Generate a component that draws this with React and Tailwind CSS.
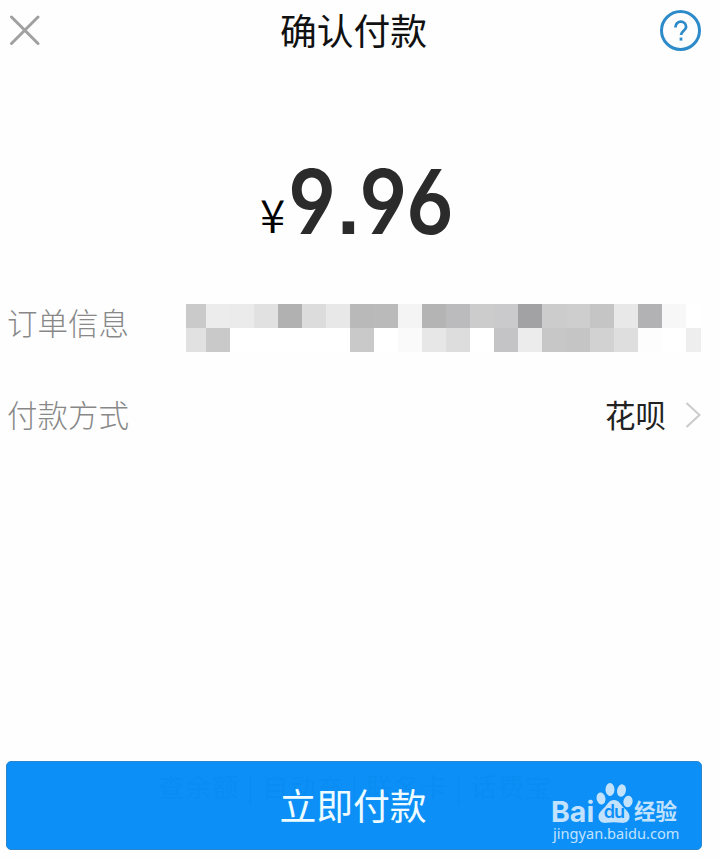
import React from 'react';

// 订单信息的马赛克色块（两行）
const MOSAIC_ROWS = [
  ['#cacaca', '#ececec', '#ebebeb', '#e1e1e1', '#b1b1b1', '#dcdcdc', '#e8e8e8', '#b9b9b9', '#bababa', '#f4f4f4', '#b4b4b4', '#bbbbbd', '#cccccc', '#cacacc', '#a2a2a4', '#cccccc', '#cecece', '#c5c5c5', '#e8e8e8', '#b2b2b4', '#f7f7f7', '#ffffff'],
  ['#e1e1e1', '#c9c9c9', '#ffffff', '#ffffff', '#ffffff', '#ffffff', '#ffffff', '#c9c9c9', '#ffffff', '#fafafa', '#e7e7e7', '#dddddd', '#ffffff', '#c4c4c6', '#ececec', '#c7c7c7', '#c5c5c5', '#d2d2d2', '#dedede', '#fdfdfd', '#ffffff', '#eeeeee'],
];

function Mosaic() {
  return (
    <div className="grid w-[515px] grid-cols-[20px_repeat(20,24px)_15px]">
      {MOSAIC_ROWS.flat().map((color, i) => (
        <div key={i} className="h-6" style={{ backgroundColor: color }} />
      ))}
    </div>
  );
}

function Header() {
  return (
    <header className="flex h-[61px] items-center justify-between pl-[9px] pr-[19px]">
      <svg className="h-8 w-8" viewBox="0 0 32 32" fill="none" stroke="#a0a0a0" strokeWidth="3" strokeLinecap="round">
        <path d="M2.5 2 29 28.500M29 2 2.5 28.500" />
      </svg>
      <h1 className="ml-[6px] -mt-1 text-[36.800px] leading-[60px] font-normal text-[#111111]">确认付款</h1>
      <div className="flex h-[41px] w-[41px] items-center justify-center rounded-full border-[3px] border-[#2e8bc9]">
        <svg className="h-6 w-5" viewBox="0 0 20 24" fill="none" stroke="#2e8bc9" strokeWidth="2.8">
          <path d="M4.500 8.500V8a5.300 5.300 0 0 1 10.600 0c0 3.400-5.100 4.200-5.100 8" />
          <path d="M10 18.6v3" />
        </svg>
      </div>
    </header>
  );
}

// 百度经验水印
function Watermark() {
  return (
    <div className="absolute top-[20px] right-[22px] h-[62px] w-[128px] text-[#c2e2fd]">
      <span className="absolute top-[13px] left-0 font-[Inter] text-[28.500px] leading-[33px] font-bold">Bai</span>
      <svg className="absolute top-0 left-[45px] h-[42px] w-10" viewBox="0 0 40 42" fill="currentColor">
        <ellipse cx="5" cy="16.5" rx="4.4" ry="6" transform="rotate(-10 5 16.5)" />
        <ellipse cx="14" cy="7.5" rx="4.5" ry="6.5" />
        <ellipse cx="25.5" cy="8.5" rx="4.4" ry="6.2" transform="rotate(12 25.5 8.5)" />
        <ellipse cx="32" cy="19.5" rx="4.6" ry="5.8" transform="rotate(10 32 19.5)" />
        <path d="M18 18c5 0 6.500 4.500 10 8 3 2.800 6 5.500 5.500 9.500-.5 4-4.500 6-8.500 5.300-4.500-.8-9.500-.8-14 0C6.500 41.500 3 39.500 2.500 35.500c-.4-4 2.500-6.500 5.500-9.500 3.500-3.500 5-8 10-8Z" />
      </svg>
      <span className="absolute top-[18px] left-[51px] w-6 text-center font-[Inter] text-[18px] leading-6 font-semibold tracking-[-1px] text-[#0c90f8]">du</span>
      <span className="absolute top-[13px] left-[83px] text-[21.500px] leading-[30px] font-bold whitespace-nowrap">经验</span>
      <span className="absolute top-[41px] left-[2px] font-['Noto_Sans'] text-[14.600px] leading-[20px]">jingyan.baidu.com</span>
    </div>
  );
}

export default function App() {
  return (
    <div className="flex h-[859px] w-[720px] flex-col overflow-hidden bg-[#fefefe] font-['Noto_Sans_CJK_SC',sans-serif]">
      <Header />

      {/* 金额 */}
      <div className="mt-[86px] mb-px flex h-[110px] pl-[260px]">
        <span className="mt-[36px] w-[28px] text-[46px] leading-[60px] font-[350] text-black">¥</span>
        <span className="origin-left scale-x-[0.88] font-[Inter] text-[90px] leading-[110px] font-[640] text-[#2b2b2b] [font-feature-settings:'ss01','ss07','cv03','cv04'] [font-optical-sizing:none]">
          <span>9</span>
          <span className="tracking-[-2px]">.</span>
          <span>9</span>
          <span>6</span>
        </span>
      </div>

      <div className="mt-[46px] flex h-12 items-center justify-between pr-[19px] pl-[7px]">
        <span className="relative -top-[6px] text-[30.500px] leading-[44px] font-light text-[#888888]">订单信息</span>
        <Mosaic />
      </div>

      <div className="mt-[38px] mb-px flex h-12 items-center pr-[19px] pl-[7px] leading-[44px]">
        <span className="text-[30.500px] font-light text-[#888888]">付款方式</span>
        <span className="ml-auto text-[30.500px] text-[#222222]">花呗</span>
        <svg className="mt-px ml-[19px] h-7 w-4" viewBox="0 0 16 28" fill="none" stroke="#cccccc" strokeWidth="2.200">
          <path d="m1.500 2 13 12-13 12" />
        </svg>
      </div>

      <div className="mt-auto mb-[9px] ml-[6px]">
        <button className="relative block h-[89px] w-[696px] overflow-hidden rounded-[5px] border border-[#2a86cf] bg-[#0c90f8]">
          <span className="absolute top-[8px] left-[151px] text-[26px] leading-8 tracking-[1.250px] whitespace-pre text-[#0a8cf3]">查余额 | 自动充 | 联名卡 | 话费宝</span>
          <span className="relative -top-[2px] -left-px text-[36.800px] leading-[86px] text-[#effcff]">立即付款</span>
          <Watermark />
        </button>
      </div>
    </div>
  );
}
